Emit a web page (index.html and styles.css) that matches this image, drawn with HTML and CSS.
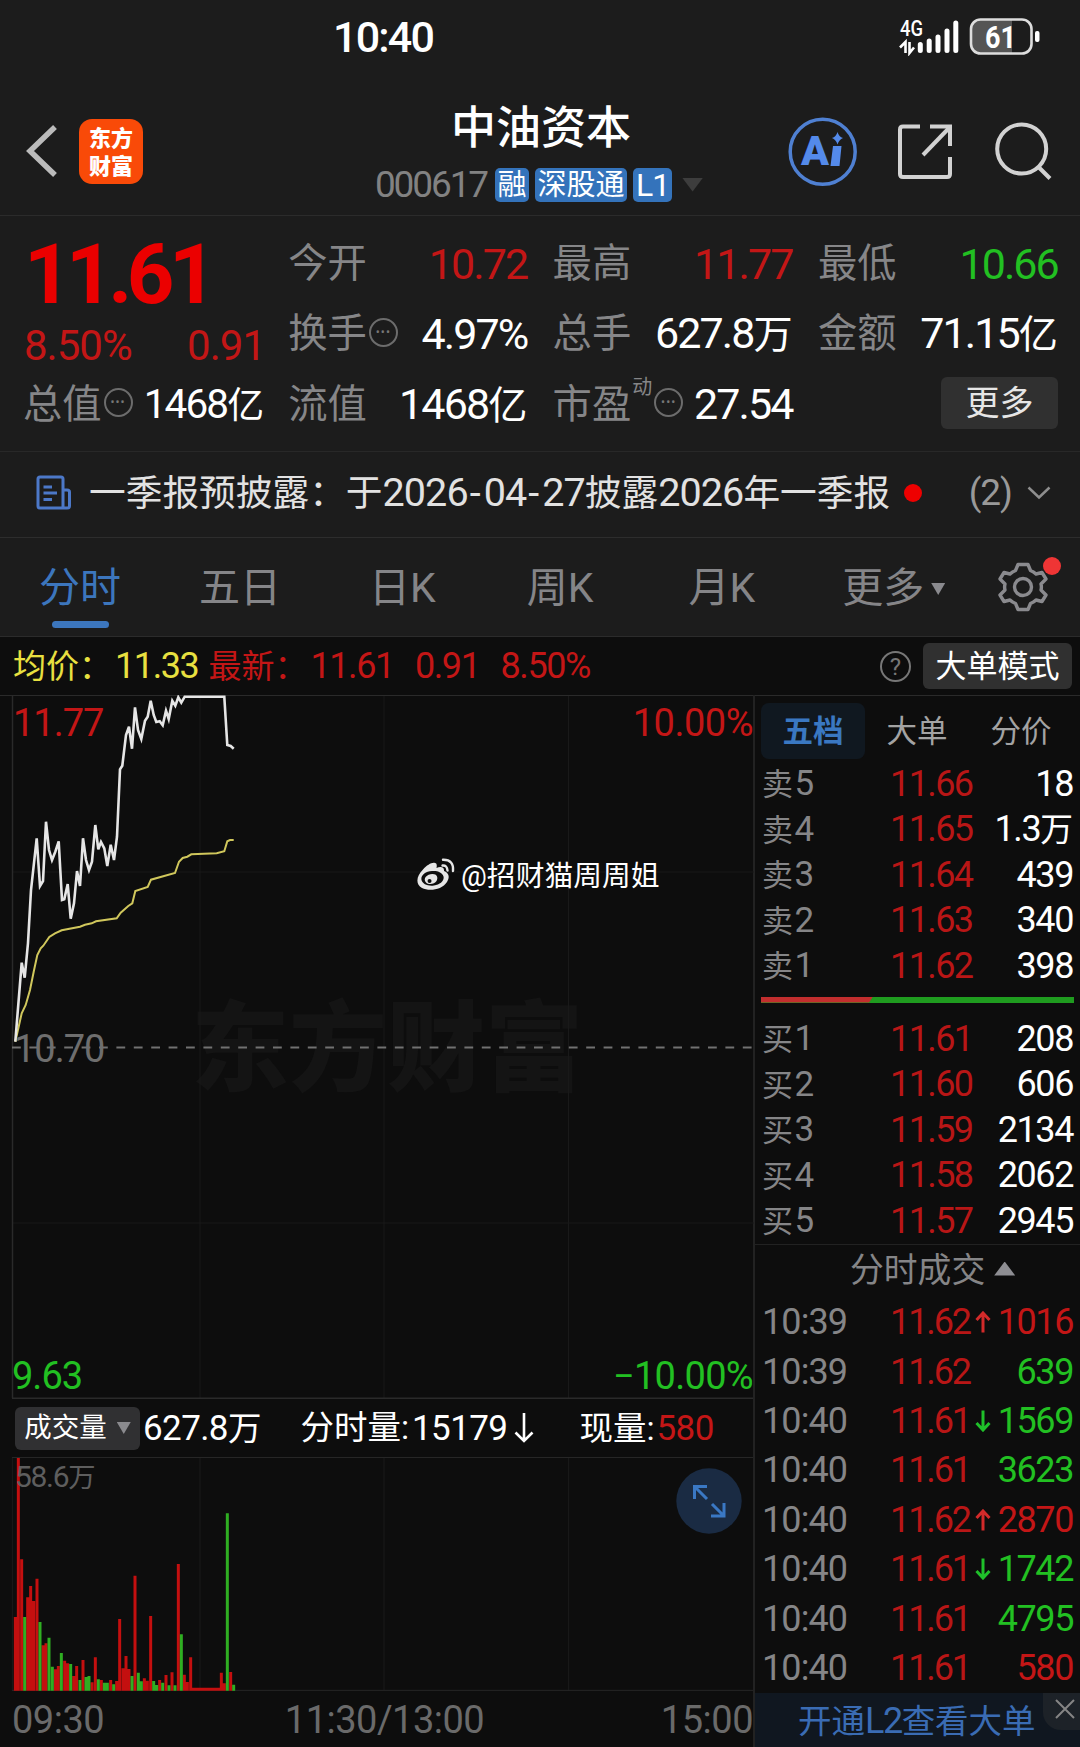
FILE: index.html
```html
<!DOCTYPE html>
<html lang="zh-CN">
<head>
<meta charset="utf-8">
<title>中油资本 000617</title>
<link rel="stylesheet" href="styles.css">
</head>
<body>
<div class="status">
  <div class="clock">10:40</div>
  <svg class="status-icons" width="142" height="40" viewBox="898 16 142 40">
    <text class="net" x="900" y="36" textLength="23" lengthAdjust="spacingAndGlyphs">4G</text>
    <path d="M900 47.5 L905.500 42 V53 M909.500 42 V53 L914 47.500" fill="none" stroke="#fff" stroke-width="2.600"/>
    <path d="M920.300 44.500V50.500M929.200 41V50.500M938 37V50.500M947 31V50.500M955.800 23V50.500" stroke="#fff" stroke-width="5" stroke-linecap="round"/>
    <path d="M980 20H1012V53H980Q971 53 971 44V29Q971 20 980 20Z" fill="#555"/>
    <rect x="971" y="19.500" width="60.500" height="34" rx="9.500" fill="none" stroke="#ddd" stroke-width="2.600"/>
    <rect x="1035" y="31" width="4.500" height="11" rx="2" fill="#fff"/>
    <text class="batt" x="985" y="47.500" textLength="31" lengthAdjust="spacingAndGlyphs">61</text>
  </svg>
</div>

<header class="header">
  <div class="brand">
    <svg width="32" height="56" viewBox="0 0 32 56"><path d="M29 4L4 28L29 52" fill="none" stroke="#bbb" stroke-width="5.500"/></svg>
    <div class="logo"><span>东方</span><span>财富</span></div>
  </div>
  <div class="title">
    <h1>中油资本</h1>
    <div class="sub"><span class="code">000617</span><span class="tag">融</span><span class="tag">深股通</span><span class="tag lv">L1</span><i class="tri down big"></i></div>
  </div>
  <div class="tools">
    <svg width="70" height="70" viewBox="788 117 70 70"><circle cx="822.700" cy="151.700" r="32.500" fill="none" stroke="#4f80d2" stroke-width="3.500"/><text class="ai" x="801" y="165" textLength="28" lengthAdjust="spacingAndGlyphs">A</text><path d="M833 146H841.500L839.500 166H830.500Z M837.500 132Q839 137 843 138Q839 139.500 837.500 144.500Q836 139.500 832 138Q836 137 837.500 132Z" fill="#548aea"/></svg>
    <svg class="share" width="56" height="57" viewBox="897 123 56 57"><g fill="none" stroke="#d2d2d2" stroke-width="4"><path d="M920 126.500H903Q900 126.500 900 129.500V174Q900 177 903 177H947Q950 177 950 174V157"/><path d="M930 126.500H950V146"/><path d="M950 127L923 155"/></g></svg>
    <svg width="58" height="58" viewBox="994 122 58 58"><g fill="none" stroke="#d2d2d2" stroke-width="4"><circle cx="1021.700" cy="149" r="24.500"/><path d="M1038.500 167L1050 178.500"/></g></svg>
  </div>
</header>

<section class="quote">
  <div class="now">
    <div class="price">11.61</div>
    <div class="chg"><span>8.50%</span><span>0.91</span></div>
  </div>
  <div class="cell"><label>今开</label><b class="up">10.72</b></div>
  <div class="cell"><label>最高</label><b class="up">11.77</b></div>
  <div class="cell"><label>最低</label><b class="dn">10.66</b></div>
  <div class="cell"><label>换手<i class="dots">•••</i></label><b>4.97%</b></div>
  <div class="cell"><label>总手</label><b>627.8<u>万</u></b></div>
  <div class="cell"><label>金额</label><b>71.15<u>亿</u></b></div>
  <div class="cell"><label>总值<i class="dots">•••</i></label><b class="narrow">1468<u>亿</u></b></div>
  <div class="cell"><label>流值</label><b>1468<u>亿</u></b></div>
  <div class="cell"><label>市盈<sup>动</sup><i class="dots">•••</i></label><b>27.54</b></div>
  <div class="cell end"><button class="more">更多</button></div>
</section>

<section class="notice">
  <svg width="36" height="36" viewBox="0 0 36 36"><g fill="none" stroke="#4c78c8" stroke-width="3"><path d="M27 33H4Q2 33 2 31V4Q2 2 4 2H25Q27 2 27 4V33H31Q33.500 33 33.500 31V17Q33.500 15 31 15H27"/><path d="M7.500 12H16M7.500 18H21M7.500 24.500H16"/></g></svg>
  <p>一季报预披露：于<span>2026</span><span class="dash">-</span><span>04</span><span class="dash">-</span><span>27</span>披露<span>2026</span>年一季报</p>
  <i class="dot"></i>
  <span class="count">(2)</span>
  <svg class="chev" width="24" height="14" viewBox="0 0 24 14"><path d="M1.500 1.500L12 11.500L22.500 1.500" fill="none" stroke="#8e8e8e" stroke-width="2.500"/></svg>
</section>

<nav class="tabs">
  <a class="on">分时</a><a>五日</a><a>日K</a><a>周K</a><a>月K</a><a>更多<i class="tri down sm"></i></a>
  <div class="gear">
    <svg width="50" height="52" viewBox="-25 -26 50 52"><g fill="none" stroke="#8a8a8e" stroke-width="3.400" stroke-linejoin="round"><path d="M-5 -22.500H5L7.500 -16.500Q11 -15 13 -13L19 -14.500L23 -8L18 -3Q18.800 0 18 3L23 8L19 14.500L13 13Q11 15 7.500 16.500L5 22.500H-5L-7.500 16.500Q-11 15 -13 13L-19 14.500L-23 8L-18 3Q-18.800 0 -18 -3L-23 -8L-19 -14.500L-13 -13Q-11 -15 -7.500 -16.500Z"/><circle r="8.500"/></g></svg>
    <i class="badge"></i>
  </div>
</nav>

<div class="info">
  <span class="avg">均价：<b>11.33</b></span>
  <span class="last">最新：<b>11.61</b><b>0.91</b><b>8.50%</b></span>
  <i class="help">?</i>
  <button class="mode">大单模式</button>
</div>

<main class="main">
  <div class="left">
    <div class="chart">
      <span class="mark">东方财富</span>
      <svg width="754" height="704" viewBox="0 695 754 704">
        <path d="M12.500 695V1398.500M200 696V1398M384 696V1398M568.500 696V1398M12 872H754M12 1223H754" fill="none" stroke="#191919"/>
        <path d="M12.500 695V1398M12 1398.300H753" fill="none" stroke="#2a2a2a" stroke-width="1.500"/>
        <path d="M12 1047.500H754" stroke="#717171" stroke-width="1.800" stroke-dasharray="8.800 8.600"/>
        <polyline fill="none" stroke="#d0c75c" stroke-width="2" points="15.300,1041.700 21.700,1013.300 25.700,1005 30,990 33.700,971.700 37.300,955 40.700,948.300 43.300,945.700 49.300,937 55,933.300 61.700,930.300 80,926.700 85,924.700 91.700,923.300 96,921.300 116.700,918.300 120.700,912.700 128.300,906 132.300,903.300 135.300,891 147.700,887 151,879.700 175,873 179,861.700 182.700,858 187.300,856.700 191.300,854.300 216.700,853.300 224.300,851.300 227.300,841.300 230,840 233.700,840"/>
        <polyline fill="none" stroke="#e6e6e6" stroke-width="2.600" points="15.300,1041.700 21.700,962.700 24.700,977.700 28,943 31,890 36.700,838.300 40,886 43,881 46,821.700 49,850 52,860 55.300,851.700 58.700,841.300 60.300,870 62,900 64.300,899.300 67.700,884 70.700,918.700 74,903.300 77,871 80,886 83,838.300 86,860 89,870 92,861.700 95.300,825 98.300,849.300 101,842 104.300,848.300 107.300,866 110.700,844.700 114,860 117,836.700 120,769.300 122.300,765.700 126,735 129,726.700 132,748.700 135,707.300 138,730 141.300,739 145,720.700 147.700,716.700 150.700,700.700 153.700,715 156.300,722 159.700,721.300 162.700,725.300 166,710.700 168.700,719 172.300,700.700 175.300,705.700 178.300,697.300 181.300,702.700 184.700,696.700 224.300,696.700 227.300,745 230.700,746 233.700,748.700"/>
      </svg>
      <span class="ax tl up">11.77</span><span class="ax tr up">10.00%</span>
      <span class="ax ml">10.70</span>
      <span class="ax bl dn">9.63</span><span class="ax br dn">−10.00%</span>
      <div class="weibo">
        <svg width="38" height="32" viewBox="0 0 38 32"><path fill="#e6e6e6" fill-rule="evenodd" d="M18 5C20 5 20 8 19.500 10C23 8.500 27.500 8.500 27 13C32 15 33 19 30 24C25 32 12 33.500 5 30C-2 26 -.5 18 6 11.500C10 7 15 4 18 5ZM15 13C8 13.500 3.500 17.500 4.500 22C5.500 26 11 28.500 17 27.500C23.500 26.500 27.500 22.500 26.500 18.500C25.500 14.500 20.500 12.500 15 13Z"/><path fill="#e6e6e6" fill-rule="evenodd" d="M15.500 16C20 16 21.500 19.500 19.500 23C17.500 26.500 11.500 27 9 24.500C5.500 20.500 10 16 15.500 16ZM12.500 21A2 2 0 1 0 12.600 25A2 2 0 1 0 12.500 21Z"/><path d="M25.500 7.500Q30 7 30.500 12.500M26 1.800Q37 1.500 36 13" fill="none" stroke="#e6e6e6" stroke-width="2.400" stroke-linecap="round"/></svg>
        <span>@招财猫周周姐</span>
      </div>
    </div>
    <div class="volhead">
      <button class="pick">成交量<i class="tri down sm"></i></button>
      <span class="v1"><b>627.8</b>万</span>
      <span class="v2">分时量:<b>15179</b><svg width="20" height="32" viewBox="0 0 20 32"><path d="M10 1V29M1.500 20.500L10 29L18.500 20.500" fill="none" stroke="#fff" stroke-width="2.600"/></svg></span>
      <span class="v3">现量:<b class="up">580</b></span>
    </div>
    <div class="volume">
      <svg width="754" height="234" viewBox="0 261 2262 702">
        <path d="M37 262V962M600 262V962M1152 262V962M1706 262V962" stroke="#1b1b1b" stroke-width="3"/>
        <path d="M36 262.500H2260M36 961H2260" stroke="#262626" stroke-width="3"/>
        <path stroke="#c40f0f" stroke-width="9" d="M46 962V741M55 962V264M65 962V568M83 962V682M92 962V648M101 962V693M111 962V626M129 962V826M138 962V820M166 962V898M175 962V888M194 962V872M203 962V880M221 962V918M230 962V888M249 962V870M276 962V937M286 962V862M304 962V930M332 962V930M350 962V933M359 962V747M369 962V895M378 962V858M387 962V897M405 962V617M433 962V925M442 962V932M452 962V738M479 962V930M498 962V915M516 962V907M535 962V582M553 962V914M562 962V936M572 962V862M664 962V908M673 962V940M692 962V906M576 957.500H660"/>
        <path stroke="#2fae22" stroke-width="9" d="M74 962V741M120 962V756M147 962V803M157 962V890M184 962V849M212 962V882M240 962V930M258 962V921M267 962V918M295 962V928M313 962V938M322 962V938M341 962V943M396 962V918M415 962V908M424 962V934M461 962V933M470 962V945M488 962V938M507 962V946M525 962V946M544 962V793M682 962V430M701 962V944"/>
      </svg>
      <span class="vmax">58.6<u>万</u></span>
      <svg class="expand" width="66" height="66" viewBox="0 0 66 66"><circle cx="33" cy="33" r="32.700" fill="#1a2b43"/><path d="M31 18.500H18.500V31M18.500 18.500L31 31M36 36L48 48M48 35V48H35" fill="none" stroke="#3a78c4" stroke-width="3"/></svg>
    </div>
    <div class="times"><span>09:30</span><span>11:30/13:00</span><span>15:00</span></div>
  </div>

  <aside class="right">
    <div class="seg"><a class="on">五档</a><a>大单</a><a>分价</a></div>
    <div class="book">
      <div><span>卖<b>5</b></span><em>11.66</em><strong>18</strong></div>
      <div><span>卖<b>4</b></span><em>11.65</em><strong>1.3<u>万</u></strong></div>
      <div><span>卖<b>3</b></span><em>11.64</em><strong>439</strong></div>
      <div><span>卖<b>2</b></span><em>11.63</em><strong>340</strong></div>
      <div><span>卖<b>1</b></span><em>11.62</em><strong>398</strong></div>
    </div>
    <div class="ratio"><div class="bids" style="width: 35.8%"></div></div>
    <div class="book">
      <div><span>买<b>1</b></span><em>11.61</em><strong>208</strong></div>
      <div><span>买<b>2</b></span><em>11.60</em><strong>606</strong></div>
      <div><span>买<b>3</b></span><em>11.59</em><strong>2134</strong></div>
      <div><span>买<b>4</b></span><em>11.58</em><strong>2062</strong></div>
      <div><span>买<b>5</b></span><em>11.57</em><strong>2945</strong></div>
    </div>
    <div class="dealhead">分时成交<i class="tri up"></i></div>
    <div class="book deals">
      <div><span>10:39</span><em>11.62</em><svg class="arr" viewBox="0 0 16 22"><path d="M8 21.500V2M1.500 9L8 2L14.500 9" stroke="#d32a2a"/></svg><strong class="up">1016</strong></div>
      <div><span>10:39</span><em>11.62</em><strong class="dn">639</strong></div>
      <div><span>10:40</span><em>11.61</em><svg class="arr" viewBox="0 0 16 22"><path d="M8 .5V20M1.500 13L8 20L14.500 13" stroke="#1fc02a"/></svg><strong class="dn">1569</strong></div>
      <div><span>10:40</span><em>11.61</em><strong class="dn">3623</strong></div>
      <div><span>10:40</span><em>11.62</em><svg class="arr" viewBox="0 0 16 22"><path d="M8 21.500V2M1.500 9L8 2L14.500 9" stroke="#d32a2a"/></svg><strong class="up">2870</strong></div>
      <div><span>10:40</span><em>11.61</em><svg class="arr" viewBox="0 0 16 22"><path d="M8 .5V20M1.500 13L8 20L14.500 13" stroke="#1fc02a"/></svg><strong class="dn">1742</strong></div>
      <div><span>10:40</span><em>11.61</em><strong class="dn">4795</strong></div>
      <div><span>10:40</span><em>11.61</em><strong class="up">580</strong></div>
    </div>
    <div class="promo">开通<b>L2</b>查看大单
      <span class="close"><svg width="20" height="20" viewBox="0 0 20 20"><path d="M1 1L19 19M19 1L1 19" stroke="#858585" stroke-width="2"/></svg></span>
    </div>
  </aside>
</main>
</body>
</html>
```
FILE: styles.css
```css
* { box-sizing: border-box; }
body {
  margin: 0; width: 1080px; height: 1747px; overflow: hidden;
  background: #1c1c1c; color: #fff;
  font-family: Roboto, "Noto Sans CJK SC", sans-serif;
  line-height: 1; white-space: nowrap;
}
i, em { font-style: normal; }
b, strong { font-weight: 400; }
u { text-decoration: none; letter-spacing: 0; font-size: .91em; }
button { font-family: inherit; line-height: 1; border: 0; color: #fff; background: #303030; border-radius: 6px; padding: 0; display: flex; align-items: center; justify-content: center; }
svg { display: block; flex: none; }
.up { color: #c31616; }
.dn { color: #22c022; }

.tri { display: inline-block; width: 14px; height: 12px; background: #8a8a8e; }
.tri.down { clip-path: polygon(0 0, 100% 0, 50% 100%); }
.tri.up { width: 21px; height: 14px; clip-path: polygon(50% 0, 100% 100%, 0 100%); background: #8e8e93; }
.tri.big { width: 21px; height: 14px; background: #3d3d3d; }

/* status bar */
.status { height: 72px; display: flex; justify-content: space-between; padding: 16px 40px 0 333px; }
.clock { font-size: 43px; font-weight: 500; letter-spacing: -1.800px; }
.net { font: 500 22px Roboto; fill: #fff; }
.batt { font: 700 32px Roboto; fill: #fff; }

/* header */
.header { height: 144px; display: flex; position: relative; justify-content: space-between; border-bottom: 1px solid #2b2b2b; padding: 0 28px 0 26px; }
.brand { display: flex; gap: 21px; padding-top: 47px; align-items: flex-start; }
.brand svg { margin-top: 4px; }
.logo { width: 64px; height: 65px; border-radius: 13px; background: #f94a08; display: flex; flex-direction: column; align-items: center; justify-content: center; padding-bottom: 3px; gap: 5px; font: 900 22px/23px "Noto Sans CJK SC", sans-serif; }
.title { display: flex; flex-direction: column; padding: 34px 0 0 151px; align-items: center; }
h1 { margin: 0; font-size: 45px; font-weight: 500; line-height: 46px; height: 61px; }
.sub { display: flex; align-items: center; gap: 6px; height: 35px; margin-left: -4px; }
.code { font-size: 37px; color: #828282; letter-spacing: -2.100px; margin-right: 2px; }
.tag { height: 34px; padding: 0 2.500px; border-radius: 5px; background: #3473bb; font-size: 29px; line-height: 34px; }
.tag.lv { width: 39px; padding: 0; text-align: center; font-size: 32px; letter-spacing: -1px; }
.sub .tri { margin-left: 4px; }
.tools { display: flex; padding-top: 45px; align-items: flex-start; }
.share { margin: 6px 41px 0 39px; }
.tools svg:last-child { margin-top: 5px; }
.ai { font: 900 41px Roboto; fill: #548aea; }

/* quote grid */
.quote { height: 236px; border-bottom: 1px solid #282828; padding: 13px 23px 0 24px; display: grid; grid-template-columns: 239px 238px 239px 239px; column-gap: 26.300px; grid-template-rows: 70px 70px 71px; }
.now { grid-row: 1 / 3; }
.price { font-size: 83px; font-weight: 700; color: #eb0000; letter-spacing: -5.500px; padding: 4px 0 0; height: 96px; }
.chg { display: flex; justify-content: space-between; font-size: 42px; color: #c31616; letter-spacing: -1px; margin-right: -2px; }
.cell { display: flex; justify-content: space-between; align-items: center; font-size: 43px; }
.cell label { display: flex; align-items: center; color: #868688; font-size: 39.300px; margin: 2px 0 0 -1px; }
.cell b { letter-spacing: -1.900px; }
.cell b.narrow { font-size: 40.500px; margin-right: -1px; }
.cell.end { justify-content: flex-end; padding-bottom: 3px; }
.dots { width: 29px; height: 29px; margin: -5px 0 0 2px; border: 2px solid #6c6c6c; border-radius: 50%; font-size: 12px; line-height: 25px; letter-spacing: 1px; text-align: center; color: #777; }
sup { font-size: 20px; margin: -36px 0 0 1px; line-height: 20px; }
.more { width: 117px; height: 52px; font-size: 34px; color: #e6e6e6; }

/* notice */
.notice { height: 86px; display: flex; align-items: center; border-bottom: 1px solid #2d2d2d; padding: 0 29px 4px 36px; color: #e2e2e2; }
.notice p { margin: 0 0 0 17px; font-size: 36.700px; }
.notice p span { font-size: 39.500px; letter-spacing: -.900px; }
.notice p .dash { letter-spacing: 3px; margin-left: 2px; }
.dot { width: 18px; height: 18px; border-radius: 50%; background: #ee0000; margin-left: 14px; }
.count { color: #999; font-size: 37px; margin-left: auto; letter-spacing: -1px; }
.chev { margin-left: 15px; }

/* chart tabs */
.tabs { height: 99px; display: flex; align-items: center; border-bottom: 1px solid #2b2b2b; font-size: 41px; color: #858588; padding: 3px 0 0 39px; position: relative; }
.tabs a { position: relative; }
.tabs a:nth-child(2) { margin-left: 78px; }
.tabs a:nth-child(3) { margin-left: 88px; }
.tabs a:nth-child(4) { margin-left: 91px; }
.tabs a:nth-child(5) { margin-left: 95px; }
.tabs a:nth-child(6) { margin-left: 87px; }
.tabs .on { color: #3c76bd; }
.tabs .on::after { content: ""; position: absolute; left: 13px; top: 53px; width: 57px; height: 7px; border-radius: 4px; background: #3c76bd; }
.tabs .sm { margin: 0 0 7px 7px; }
.gear { position: absolute; left: 998px; top: 23px; }
.badge { position: absolute; left: 45px; top: -4px; width: 18px; height: 18px; border-radius: 50%; background: #ef3535; }

/* info line */
.info { height: 59px; background: #0d0d0d; border-bottom: 1px solid #2a2a2a; display: flex; align-items: center; font-size: 33px; padding: 0 8px 0 13px; }
.info b { font-size: 36px; letter-spacing: -1.400px; }
.avg { color: #e8e040; }
.avg b { margin-left: 3px; }
.last { color: #c31616; margin-left: 10px; }
.last b { margin-left: 3px; }
.last b + b { margin-left: 21px; }
.help { margin-left: auto; margin-right: 12px; width: 31px; height: 31px; border: 2px solid #777; border-radius: 50%; color: #777; font-size: 24px; line-height: 28px; text-align: center; }
.mode { width: 149px; height: 46px; font-size: 31px; }

.main { display: flex; background: #0d0d0d; height: 1052px; margin-top: -1px; border-top: 1px solid #2a2a2a; }
.left { width: 755px; margin-top: -1px; border-right: 2px solid #222; }
.chart { position: relative; height: 704px; }
.chart > svg { position: relative; }
.ax { position: absolute; font-size: 38px; letter-spacing: -1px; }
.tl { left: 13px; top: 9px; } .tr { right: 0; top: 9px; letter-spacing: -.500px; }
.ml { left: 14px; top: 335px; color: #6e6e6e; }
.bl { left: 12px; bottom: 4px; } .br { right: 0; bottom: 4px; letter-spacing: -.700px; }
.mark { position: absolute; left: 191px; top: 290px; font: 900 98px/110px "Noto Sans CJK SC", sans-serif; color: #141414; }
.weibo { position: absolute; left: 417px; top: 163px; display: flex; align-items: center; gap: 6px; font-size: 28.800px; }
.weibo span { padding-top: 4px; }
.volhead { height: 58px; display: flex; align-items: center; padding-left: 15px; font-size: 33.500px; }
.volhead b { font-size: 35px; letter-spacing: -.600px; }
.pick { width: 125px; height: 43px; font-size: 27.500px; gap: 10px; background: #303032; }
.v1 { margin-left: 3px; }
.v2 { margin-left: 39px; display: flex; align-items: center; }
.v2 b { margin-left: 3px; }
.v2 svg { margin-left: 7px; }
.v3 { margin-left: 45px; }
.v3 b { margin-left: 2px; }
.volume { position: relative; height: 234px; }
.vmax { position: absolute; left: 15px; top: 5px; font-size: 30px; color: #5e5e5e; letter-spacing: -1.300px; }
.expand { position: absolute; left: 676px; top: 11px; }
.times { height: 56px; display: flex; justify-content: space-between; align-items: center; font-size: 38px; letter-spacing: -.500px; color: #6a6a6a; padding: 2px 0 0 12px; }
.times span:nth-child(2) { padding-left: 4px; }

/* order book */
.right { width: 325px; padding-left: 6px; }
.seg { display: flex; height: 65px; padding-top: 7px; font-size: 30.500px; color: #a3a3a3; }
.seg a { height: 56px; line-height: 58px; width: 104px; text-align: center; border-radius: 8px; }
.seg .on { background: #101820; color: #3a78c2; font-weight: 700; }
.book > div { display: grid; grid-template-columns: 130px 84px 18px 1fr; height: 45.500px; align-items: center; font-size: 36px; letter-spacing: -1.400px; padding-right: 7px; }
.book span { color: #858587; font-size: 31px; padding-left: 1px; }
.book b { font-size: 35px; margin-left: 3px; }
.book em { color: #b81616; grid-column: 2; letter-spacing: -1.600px; margin-left: -1px; }
.book strong { text-align: right; grid-column: 4; margin-left: -20px; }
.ratio { height: 6px; margin: 8px 6px 13.500px 0; background: #1f9b1f; }
.bids { height: 6px; background: #c22e2e; clip-path: polygon(0 0, 100% 0, calc(100% - 4px) 100%, 0 100%); }
.dealhead { height: 54px; margin: 0 0 0 -6px; border-top: 1px solid #222; display: flex; align-items: center; gap: 9px; padding: 0 0 1px 95px; font-size: 33.800px; color: #858587; }
.dealhead .tri { margin-bottom: 4px; }
.deals > div { height: 49.400px; }
.deals span { font-size: 36px; letter-spacing: -.900px; }
.deals em { letter-spacing: -2.100px; }
.arr { width: 16px; height: 22px; fill: none; stroke-width: 3px; }
.promo { position: relative; margin-left: -6px; height: 58px; background: #101720; color: #3a6cb4; font-size: 33.500px; line-height: 56px; padding-left: 43px; }
.promo b { font-size: 36px; letter-spacing: -1.500px; }
.close { position: absolute; right: 0; top: 0; width: 37px; height: 37px; background: #1d2228; border-bottom-left-radius: 18px; padding: 6px 0 0 12px; }
```
